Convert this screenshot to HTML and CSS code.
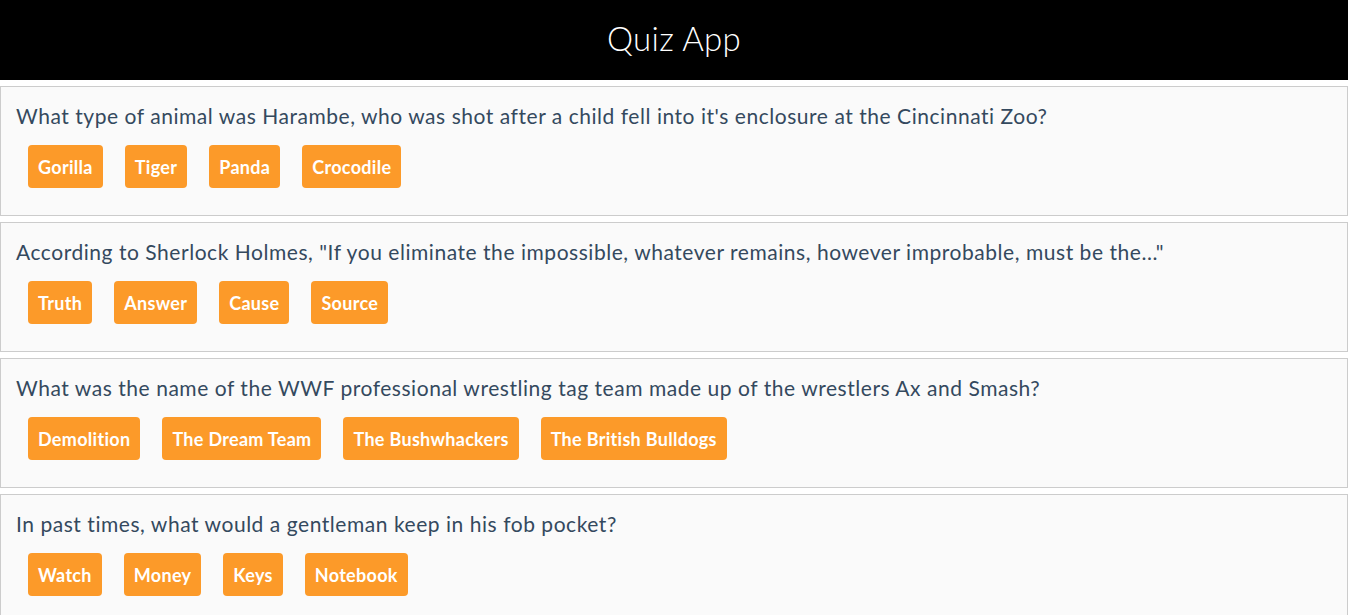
FILE: index.html
```html
<!DOCTYPE html>
<html>
<head>
<meta charset="utf-8">
<title>Quiz App</title>
<link rel="stylesheet" href="styles.css">
</head>
<body>
<header class="top-bar"><h1 class="title">Quiz App</h1></header>
<main class="quiz">
  <section class="card">
    <p class="question">What type of animal was Harambe, who was shot after a child fell into it's enclosure at the Cincinnati Zoo?</p>
    <div class="answers">
      <button class="answer">Gorilla</button>
      <button class="answer">Tiger</button>
      <button class="answer">Panda</button>
      <button class="answer">Crocodile</button>
    </div>
  </section>
  <section class="card">
    <p class="question">According to Sherlock Holmes, "If you eliminate the impossible, whatever remains, however improbable, must be the..."</p>
    <div class="answers">
      <button class="answer">Truth</button>
      <button class="answer">Answer</button>
      <button class="answer">Cause</button>
      <button class="answer">Source</button>
    </div>
  </section>
  <section class="card">
    <p class="question">What was the name of the WWF professional wrestling tag team made up of the wrestlers Ax and Smash?</p>
    <div class="answers">
      <button class="answer">Demolition</button>
      <button class="answer">The Dream Team</button>
      <button class="answer">The Bushwhackers</button>
      <button class="answer">The British Bulldogs</button>
    </div>
  </section>
  <section class="card">
    <p class="question">In past times, what would a gentleman keep in his fob pocket?</p>
    <div class="answers">
      <button class="answer">Watch</button>
      <button class="answer">Money</button>
      <button class="answer">Keys</button>
      <button class="answer">Notebook</button>
    </div>
  </section>
</main>
</body>
</html>
```
FILE: styles.css
```css
html, body {
  margin: 0;
  padding: 0;
  background: #ffffff;
  font-family: Lato, "Open Sans", sans-serif;
}
.top-bar {
  height: 80px;
  box-sizing: border-box;
  padding-bottom: 5px;
  background: #000000;
  display: flex;
  align-items: center;
  justify-content: center;
}
.title {
  margin: 0;
  color: #ffffff;
  font-size: 33px;
  font-weight: 300;
  letter-spacing: 0.3px;
}
.quiz {
  display: flex;
  flex-direction: column;
  gap: 6px;
  padding-top: 6px;
}
.card {
  height: 130px;
  box-sizing: border-box;
  border: 1px solid #cccccc;
  background: #fafafa;
  padding: 15px 15px 0 15px;
}
.question {
  margin: 0;
  font-size: 21px;
  line-height: 27px;
  letter-spacing: 0.54px;
  color: #34495e;
}
.answers {
  display: flex;
  gap: 22px;
  margin-top: 16px;
  padding-left: 12px;
}
.answer {
  height: 43px;
  border: none;
  border-radius: 4px;
  background: #fc9a29;
  color: #ffffff;
  font-family: inherit;
  font-size: 18px;
  font-weight: 700;
  letter-spacing: 0.3px;
  padding: 0 10px;
}
```
